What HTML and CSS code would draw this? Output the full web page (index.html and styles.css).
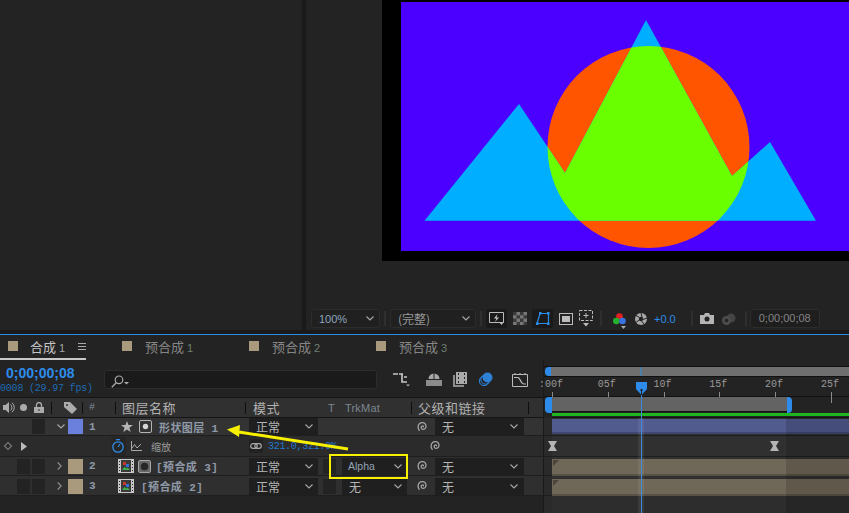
FILE: index.html
```html
<!DOCTYPE html>
<html lang="zh">
<head>
    <meta charset="UTF-8">
    <title>合成 1</title>
    <link rel="stylesheet" href="styles.css">
</head>
<body>
    <svg class="sprite" width="0" height="0">
        <symbol id="chev-down" viewBox="0 0 8 5"><path d="M0.5 0.5 4 4 7.5 0.5" fill="none" stroke="#a8a8a8" stroke-width="1.1"/></symbol>
        <symbol id="chev-right" viewBox="0 0 5 8"><path d="M0.7 0.5l3.5 3.5-3.5 3.5" fill="none" stroke="#8f8f8f" stroke-width="1.1"/></symbol>
        <symbol id="spiral" viewBox="0 0 12 12"><path d="M6.2 6.2C6.9 5.6 6 4.5 5 5 3.6 5.7 3.9 8 5.8 8.3 8.3 8.7 9.7 6 8.7 3.8 7.7 1.5 4.5 0.9 2.6 2.5 0.6 4.2 0.6 7.8 2.5 9.8" fill="none" stroke="#a5a5a5" stroke-width="1.3"/></symbol>
        <symbol id="comp" viewBox="0 0 16 14">
            <rect x="0.5" y="0.5" width="15" height="13" fill="#3a3a3a" stroke="#c8c8c8"/>
            <path d="M0 0h3v14H0zM13 0h3v14h-3z" fill="#c8c8c8"/>
            <path d="M1 2h1v1H1zM1 5h1v1H1zM1 8h1v1H1zM1 11h1v1H1zM14 2h1v1h-1zM14 5h1v1h-1zM14 8h1v1h-1zM14 11h1v1h-1z" fill="#2a2a2a"/>
            <rect x="5" y="3" width="3" height="3" fill="#c9362c"/>
            <rect x="8" y="5" width="3" height="3" fill="#2f6fd8"/>
            <path d="M4 11l2.500-3 2 1.500 1-1 2.500 2.500z" fill="#3fae49"/>
        </symbol>
    </svg>

    <div class="upper">
        <div class="project"></div>
        <div class="splitter"></div>
        <div class="viewer">
            <div class="stage">
                <div class="comp-area">
                    <svg class="art" viewBox="401 2 448 249" width="448" height="249">
                        <defs>
                            <clipPath id="circle-clip"><circle cx="648.5" cy="147" r="101"/></clipPath>
                        </defs>
                        <rect x="401" y="2" width="448" height="249" fill="#4b00ff"/>
                        <circle cx="648.5" cy="147" r="101" fill="#ff5500"/>
                        <polygon points="424.5,220.7 519,104 565,173 646,20 732,176 770,142 816,220.7" fill="#00aeff"/>
                        <polygon clip-path="url(#circle-clip)" points="424.5,220.7 519,104 565,173 646,20 732,176 770,142 816,220.7" fill="#6aff00"/>
                    </svg>
                </div>
            </div>
            <div class="viewer-bar">
                <div class="dropdown zoom-select"><span>100%</span><svg width="8" height="5"><use href="#chev-down"/></svg></div>
                <i class="bar-sep"></i>
                <div class="dropdown res-select"><span>(完整)</span><svg width="8" height="5"><use href="#chev-down"/></svg></div>
                <i class="bar-sep"></i>
                <div class="tool tool-on">
                    <svg width="15" height="13" viewBox="0 0 15 13"><path d="M0.5 0.5h14v10H0.5z" fill="none" stroke="#bbb"/><path d="M8.5 2 5 6.5h2.5L6 10l4-4.500H7.500z" fill="#ccc"/><path d="M10 10h5l-2.500 3z" fill="#bbb"/></svg>
                </div>
                <div class="tool">
                    <svg width="14" height="13" viewBox="0 0 14 13"><rect width="14" height="13" fill="#777"/><path d="M0 0h3.500v3.300H0zM7 0h3.500v3.300H7zM3.500 3.300H7v3.300H3.500zM10.500 3.300H14v3.300h-3.500zM0 6.600h3.500v3.300H0zM7 6.600h3.500v3.300H7zM3.500 9.900H7V13H3.500zM10.500 9.900H14V13h-3.500z" fill="#3a3a3a"/></svg>
                </div>
                <div class="tool tool-on">
                    <svg width="14" height="13" viewBox="0 0 14 13"><path d="M4 1.5h8.500V11.500H1z" fill="none" stroke="#2d8ceb" stroke-width="1.2"/><path d="M3 0h2.500v2.500H3zM11 0h2.500v2.500H11zM0 10.500h2.500V13H0zM11 10.500h2.500V13H11z" fill="#2d8ceb"/></svg>
                </div>
                <div class="tool">
                    <svg width="14" height="12" viewBox="0 0 14 12"><rect x="0.5" y="0.5" width="13" height="11" fill="none" stroke="#bbb"/><rect x="3" y="3" width="8" height="6" fill="#bbb"/></svg>
                </div>
                <div class="tool tool-last">
                    <svg width="16" height="17" viewBox="0 0 16 17"><rect x="1.5" y="0.5" width="13" height="10" fill="none" stroke="#bbb" stroke-dasharray="3 1.5"/><path d="M8 3v5M5.500 5.500h5" stroke="#bbb"/><path d="M5 13h6l-3 3.500z" fill="#bbb"/></svg>
                </div>
                <i class="bar-sep sep-wide"></i>
                <svg class="rgb" width="13" height="16" viewBox="0 0 13 16"><circle cx="6.5" cy="3.6" r="3.3" fill="#e21f1f"/><circle cx="3.3" cy="8" r="3.3" fill="#23b02e"/><circle cx="9.5" cy="8" r="3.3" fill="#3a72e0"/><path d="M8 13h5l-2.500 3z" fill="#aaa"/></svg>
                <svg class="shutter" width="12" height="12" viewBox="0 0 12 12"><circle cx="6" cy="6" r="6" fill="#a9a9a9"/><circle cx="6" cy="6" r="2.2" fill="#232323"/><path d="M6 0 7 4M12 5 8 6.500M9 11 6.500 8M1 9.500 4 7M1 2.500 4.500 4.500" stroke="#232323"/></svg>
                <span class="exposure">+0.0</span>
                <i class="bar-sep"></i>
                <svg class="camera" width="14" height="11" viewBox="0 0 14 11"><path d="M0 2h4l1-2h4l1 2h4v9H0z" fill="#b5b5b5"/><circle cx="7" cy="6" r="2.5" fill="#232323"/></svg>
                <svg class="snapshot" width="15" height="12" viewBox="0 0 15 12"><circle cx="10" cy="5" r="4.5" fill="#444"/><circle cx="5.5" cy="7.5" r="4.5" fill="#4c4c4c"/><circle cx="5.5" cy="7.5" r="1.8" fill="#232323"/></svg>
                <i class="bar-sep"></i>
                <div class="time-box">0;00;00;08</div>
            </div>
        </div>
    </div>

    <div class="timeline">
        <div class="tabs">
            <div class="tab tab-active"><i class="swatch"></i><span>合成<small>1</small></span><b class="tab-menu"></b></div>
            <div class="tab"><i class="swatch"></i><span>预合成<small>1</small></span></div>
            <div class="tab"><i class="swatch"></i><span>预合成<small>2</small></span></div>
            <div class="tab"><i class="swatch"></i><span>预合成<small>3</small></span></div>
        </div>

        <div class="timeline-body">
            <div class="layers">
                <div class="controls">
                    <div class="timecode">
                        <div class="time-main">0;00;00;08</div>
                        <div class="time-sub">0008 (29.97 fps)</div>
                    </div>
                    <div class="search">
                        <svg width="20" height="13" viewBox="0 0 20 13"><circle cx="8" cy="4.8" r="3.8" fill="none" stroke="#aaa" stroke-width="1.2"/><path d="M5.2 7.7 0.8 12.3" stroke="#aaa" stroke-width="1.3"/><path d="M13 7h5l-2.500 2.500z" fill="#aaa"/></svg>
                    </div>
                    <div class="switches">
                        <svg width="17" height="15" viewBox="0 0 17 15"><path d="M0 2h5M6 2h4M9 2v8h3M11 5h3M11 10h3" fill="none" stroke="#c8c8c8" stroke-width="1.6"/><path d="M13 12.500h4l-2 2z" fill="#aaa"/></svg>
                        <svg width="16" height="13" viewBox="0 0 16 13"><path d="M2.500 6a5.500 5.500 0 0 1 11 0z" fill="#a8a8a8"/><path d="M7.500 0h1v6h-1z" fill="#232323"/><rect y="7" width="16" height="6" fill="#8c8c8c"/></svg>
                        <svg width="14" height="15" viewBox="0 0 14 15"><path d="M0 3h2v10h9v2H0z" fill="#8c8c8c"/><rect x="3" y="0" width="11" height="12" fill="#aaa"/><path d="M5 1h1v2H5zM5 5h1v2H5zM5 9h1v2H5zM11 1h1v2h-1zM11 5h1v2h-1zM11 9h1v2h-1z" fill="#232323"/></svg>
                        <svg width="14" height="14" viewBox="0 0 14 14"><circle cx="5" cy="9" r="4.7" fill="none" stroke="#2d8ceb"/><circle cx="6.5" cy="7.5" r="4.7" fill="none" stroke="#2d8ceb"/><circle cx="8.5" cy="5.5" r="5" fill="#2d80d5"/></svg>
                        <svg width="16" height="15" viewBox="0 0 16 15"><path d="M0.5 2.500h15v12H0.5z" fill="none" stroke="#bbb"/><path d="M3 1v2M8 1v2M13 1v2" stroke="#bbb"/><path d="M2 5.500h3.500C9 5.500 8 12 12 12h2" fill="none" stroke="#bbb" stroke-width="1.2"/></svg>
                    </div>
                </div>

                <div class="col-head">
                    <svg width="12" height="11" viewBox="0 0 12 11"><path d="M0 3h2.500L6 0v11L2.500 8H0z" fill="#ababab"/><path d="M7.500 2.500a4 4 0 0 1 0 6M9 0.800a6 6 0 0 1 0 9.400" fill="none" stroke="#ababab"/></svg>
                    <svg width="7" height="7" viewBox="0 0 7 7"><circle cx="3.5" cy="3.5" r="3.5" fill="#ababab"/></svg>
                    <svg width="10" height="11" viewBox="0 0 10 11"><path d="M2.500 5V3a2.500 2.500 0 0 1 5 0v2" fill="none" stroke="#ababab" stroke-width="1.3"/><path d="M0 5h10v6H0z" fill="#ababab"/><path d="M4.500 7h1v2h-1z" fill="#303030"/></svg>
                    <i class="head-sep"></i>
                    <svg width="13" height="12" viewBox="0 0 13 12"><path d="M0 0h6l7 7-5 5-8-7z" fill="#ababab"/><circle cx="3" cy="3" r="1" fill="#303030"/></svg>
                    <i class="head-sep"></i>
                    <span class="hash">#</span>
                    <i class="head-sep"></i>
                    <span>图层名称</span>
                    <i class="head-sep"></i>
                    <span>模式</span>
                    <span class="h-t">T</span>
                    <span class="h-trk">TrkMat</span>
                    <i class="head-sep"></i>
                    <span>父级和链接</span>
                    <i class="head-sep"></i>
                </div>

                <div class="layer row-1">
                    <i class="box box-b"></i>
                    <svg class="chev-open" width="8" height="5"><use href="#chev-down"/></svg>
                    <i class="label label-blue"></i>
                    <span class="num">1</span>
                    <div class="layer-name">
                        <svg width="12" height="11" viewBox="0 0 12 11"><path d="M6 0l1.500 4H12L8.400 6.700 9.700 11 6 8.400 2.300 11l1.300-4.300L0 4h4.500z" fill="#b5b5b5"/></svg>
                        <svg width="13" height="13" viewBox="0 0 13 13"><rect x="0.5" y="0.5" width="12" height="12" rx="1.5" fill="#333" stroke="#b5b5b5"/><circle cx="6.5" cy="6.5" r="2.7" fill="#d5d5d5"/></svg>
                        <span class="name-text">形状图层 1</span>
                    </div>
                    <div class="select mode"><span>正常</span><svg width="8" height="5"><use href="#chev-down"/></svg></div>
                    <svg class="link-spiral" width="12" height="12"><use href="#spiral"/></svg>
                    <div class="select parent"><span>无</span><svg width="8" height="5"><use href="#chev-down"/></svg></div>
                </div>

                <div class="sub-row">
                    <svg width="8" height="8" viewBox="0 0 8 8"><path d="M4 0.5 7.5 4 4 7.5 0.5 4z" fill="none" stroke="#aaa"/></svg>
                    <svg width="6" height="9" viewBox="0 0 6 9"><path d="M0 0l6 4.500L0 9z" fill="#bbb"/></svg>
                    <div class="watch-box">
                        <svg width="12" height="14" viewBox="0 0 12 14"><circle cx="6" cy="8" r="5.2" fill="none" stroke="#2d8ceb" stroke-width="1.3"/><path d="M4 0.7h4M6 8l2-3" stroke="#2d8ceb" stroke-width="1.2"/></svg>
                    </div>
                    <svg width="11" height="10" viewBox="0 0 11 10"><path d="M0.5 0v9.500H11" fill="none" stroke="#aaa"/><path d="M1 7l2.500-3.500L6 7l4-4" fill="none" stroke="#aaa"/></svg>
                    <span class="prop-name">缩放</span>
                    <div class="link-box">
                        <svg width="12" height="6" viewBox="0 0 12 6"><rect x="0.7" y="0.7" width="6.5" height="4.6" rx="2.3" fill="none" stroke="#aaa" stroke-width="1.2"/><rect x="4.8" y="0.7" width="6.5" height="4.6" rx="2.3" fill="none" stroke="#aaa" stroke-width="1.2"/></svg>
                    </div>
                    <span class="prop-value">321.0,321.0%</span>
                    <svg width="12" height="12"><use href="#spiral"/></svg>
                </div>

                <div class="layer row-2">
                    <i class="box box-a"></i>
                    <i class="box box-b"></i>
                    <svg class="chev" width="5" height="8"><use href="#chev-right"/></svg>
                    <i class="label"></i>
                    <span class="num">2</span>
                    <div class="layer-name name-comp">
                        <svg width="16" height="14"><use href="#comp"/></svg>
                        <svg width="13" height="13" viewBox="0 0 13 13"><rect x="0.5" y="0.5" width="12" height="12" rx="1.5" fill="#666" stroke="#a5a5a5"/><circle cx="6.5" cy="6.5" r="3.8" fill="#262626"/></svg>
                        <span class="name-text">[预合成 3]</span>
                    </div>
                    <div class="select mode"><span>正常</span><svg width="8" height="5"><use href="#chev-down"/></svg></div>
                    <i class="box box-t"></i>
                    <div class="select trk"><span class="trk-alpha">Alpha</span><svg width="8" height="5"><use href="#chev-down"/></svg></div>
                    <svg class="link-spiral" width="12" height="12"><use href="#spiral"/></svg>
                    <div class="select parent"><span>无</span><svg width="8" height="5"><use href="#chev-down"/></svg></div>
                </div>

                <div class="layer row-3">
                    <i class="box box-a"></i>
                    <i class="box box-b"></i>
                    <svg class="chev" width="5" height="8"><use href="#chev-right"/></svg>
                    <i class="label"></i>
                    <span class="num">3</span>
                    <div class="layer-name name-comp">
                        <svg width="16" height="14"><use href="#comp"/></svg>
                        <span class="name-text name-plain">[预合成 2]</span>
                    </div>
                    <div class="select mode"><span>正常</span><svg width="8" height="5"><use href="#chev-down"/></svg></div>
                    <i class="box box-t"></i>
                    <div class="select trk"><span>无</span><svg width="8" height="5"><use href="#chev-down"/></svg></div>
                    <svg class="link-spiral" width="12" height="12"><use href="#spiral"/></svg>
                    <div class="select parent"><span>无</span><svg width="8" height="5"><use href="#chev-down"/></svg></div>
                </div>
            </div>

            <div class="tracks">
                <div class="nav-bar"><i class="nav-handle"></i><i class="nav-thumb"></i></div>
                <div class="ruler">
                    <span>:00f</span><span>05f</span><span>10f</span><span>15f</span><span>20f</span><span class="major">25f</span>
                </div>
                <div class="work-bar"><i class="work-handle"></i><i class="work-range"></i><i class="work-handle work-end"></i></div>
                <div class="green-line"></div>

                <div class="track track-1"><i class="clip clip-shape"></i></div>
                <div class="track track-sub">
                    <svg class="key" width="9" height="10" viewBox="0 0 9 10"><path d="M0 0h9L6 5l3 5H0l3-5z" fill="#b5b5b5"/></svg>
                    <svg class="key key-end" width="9" height="10" viewBox="0 0 9 10"><path d="M0 0h9L6 5l3 5H0l3-5z" fill="#b5b5b5"/></svg>
                </div>
                <div class="track track-2"><i class="clip clip-comp"></i></div>
                <div class="track"><i class="clip clip-comp"></i></div>
                <div class="track-rest"></div>

                <div class="outside-work"></div>
                <div class="time-band"></div>
            </div>
        </div>

        <!-- playhead and the annotation sit on top of the panel -->
        <svg class="playhead" width="11" height="132" viewBox="0 0 11 132"><path d="M0 0h11v7l-5.500 6L0 7z" fill="#2d8ceb"/><path d="M4.500 7h2v2h-0.500v4h-1V9h-0.500z" fill="#222"/><path d="M5 13h1v119H5z" fill="#3b8ad9"/></svg>
        <div class="callout"></div>
        <svg class="arrow" width="130" height="32" viewBox="0 0 130 32"><path d="M123 24 14 7" stroke="#f7f000" stroke-width="3"/><path d="M2 4.500 15 0l-1 12z" fill="#f7f000"/></svg>
    </div>
</body>
</html>
```

FILE: styles.css
```css
* {
    box-sizing: border-box;
}

html, body {
    margin: 0;
    padding: 0;
    height: 513px;
    overflow: hidden;
}

body {
    background-color: #232323;
    color: #b5b5b5;
    font-family: "Noto Sans CJK SC", "Liberation Sans", sans-serif;
    font-size: 12px;
}

i {
    display: block;
}

.sprite {
    position: absolute;
}

/* top half */
.upper {
    display: flex;
    height: 335px;
    border-bottom: 1px solid #2d8ceb;
}

.project {
    width: 302px;
    background-color: #232323;
    border-bottom: 4px solid #1a1a1a;
}

.splitter {
    width: 4px;
    background-color: #1a1a1a;
}

.viewer {
    flex: 1;
    display: flex;
    flex-direction: column;
    min-width: 0;
    background-color: #1a1a1a;
}

.stage {
    height: 307px;
    padding-left: 76px;
    background-color: #232323;
}

.comp-area {
    height: 261px;
    padding: 2px 0 10px 19px;
    background-color: #000;
    overflow: hidden;
}

.art {
    display: block;
}

.viewer-bar {
    height: 23px;
    padding-left: 5px;
    display: flex;
    align-items: center;
    background-color: #232323;
}

.dropdown {
    height: 19px;
    display: flex;
    align-items: center;
    justify-content: space-between;
    padding: 0 5px 0 7px;
    border: 1px solid #2c2c2c;
    border-radius: 3px;
    background-color: #202020;
    color: #9a9a9a;
}

.zoom-select {
    width: 69px;
    font-family: "Liberation Sans", sans-serif;
    font-size: 11px;
    color: #8fa6bf;
}

.res-select {
    width: 86px;
    font-size: 12px;
}

.bar-sep {
    width: 2px;
    height: 15px;
    margin: 0 4px;
    background-color: #2f2f2f;
}

.sep-wide {
    margin: 0 11px 0 6px;
}

.tool {
    width: 21px;
    height: 19px;
    display: flex;
    align-items: center;
    justify-content: center;
    margin-right: 2px;
    border-radius: 2px;
}

.tool-last {
    width: 16px;
    margin-right: 0;
}

.tool-on {
    background-color: #1a1a1a;
}

.rgb {
    margin-top: 4px;
}

.shutter {
    margin-left: 9px;
}

.exposure {
    margin: 0 11px 0 7px;
    font-family: "Liberation Sans", sans-serif;
    font-size: 11px;
    color: #2d8ceb;
}

.camera {
    margin-left: 3px;
}

.snapshot {
    margin: 0 5px 0 7px;
}

.time-box {
    width: 70px;
    height: 19px;
    margin-left: -1px;
    border: 1px solid #2c2c2c;
    border-radius: 3px;
    background-color: #1e1e1e;
    color: #858585;
    font-family: "Liberation Sans", sans-serif;
    font-size: 11px;
    line-height: 17px;
    text-align: center;
}

/* timeline */
.timeline {
    position: relative;
    height: 178px;
    overflow: hidden;
}

.tabs {
    display: flex;
    height: 25px;
    padding-bottom: 3px;
}

.tab {
    width: 127px;
    padding-left: 8px;
    display: flex;
    align-items: center;
    gap: 13px;
    color: #868686;
    font-size: 13px;
}

.tab small {
    margin-left: 3px;
    font-family: "Liberation Sans", sans-serif;
    font-size: 11px;
    color: #6f7f72;
}

.tab-active {
    position: relative;
    width: 114px;
    gap: 12px;
    color: #c4c4c4;
}

.tab-active::after {
    content: "";
    position: absolute;
    left: 0;
    bottom: -3px;
    width: 86px;
    height: 2px;
    background-color: #c8c8c8;
}

.tab-active small {
    color: #a5a5a5;
}

.tab-menu {
    width: 8px;
    height: 7px;
    margin-left: 1px;
    border-top: 1px solid #aaa;
    border-bottom: 1px solid #aaa;
    background: linear-gradient(#aaa, #aaa) center / 100% 1px no-repeat;
}

.swatch {
    width: 10px;
    height: 10px;
    background-color: #a99a7e;
}

.timeline-body {
    display: flex;
    height: 153px;
}

.layers {
    width: 544px;
    border-right: 1px solid #1a1a1a;
}

.controls {
    height: 37px;
    display: flex;
    align-items: flex-start;
}

.timecode {
    width: 104px;
    white-space: nowrap;
}

.time-main {
    margin: 4px 0 0 6px;
    font-family: "Liberation Sans", sans-serif;
    font-size: 14px;
    line-height: 18px;
    font-weight: bold;
    color: #2d8ceb;
}

.time-sub {
    font-family: "Liberation Mono", monospace;
    font-size: 10px;
    line-height: 13px;
    letter-spacing: -0.2px;
    color: #1d6ab3;
}

.search {
    width: 273px;
    height: 19px;
    margin-top: 10px;
    padding: 3px 0 0 6px;
    border: 1px solid #2c2c2c;
    border-radius: 3px;
    background-color: #1a1a1a;
}

.switches {
    display: flex;
    align-items: center;
    margin: 11px 0 0 16px;
    height: 16px;
}

.switches svg:nth-child(2) {
    margin-left: 16px;
}

.switches svg:nth-child(3) {
    margin-left: 11px;
}

.switches svg:nth-child(4) {
    margin-left: 12px;
}

.switches svg:nth-child(5) {
    margin-left: 19px;
}

.col-head {
    height: 21px;
    padding: 0 0 3px 3px;
    display: grid;
    grid-template-columns: 17px 14px 17px 13px 18px 7px 26px 7px 123px 8px 75px 17px 66px 7px 110px 16px;
    align-items: center;
    border-top: 1px solid #151515;
    border-bottom: 1px solid #151515;
    background-color: #303030;
    font-size: 13px;
    letter-spacing: 0.5px;
    color: #b0b0b0;
}

.head-sep {
    width: 1px;
    height: 12px;
    background-color: #0e0e0e;
}

.hash {
    font-family: "Liberation Mono", monospace;
    font-size: 10px;
    color: #7d8b99;
}

.h-t, .h-trk {
    font-family: "Liberation Sans", sans-serif;
    font-size: 11px;
    letter-spacing: 0.2px;
    color: #7d8790;
}

.layer {
    height: 20px;
    padding-top: 1px;
    display: grid;
    grid-template-columns: 17px 13px 2px 13px 10px 13px 15px 17px 149px 69px 5px 13px 6px 65px 28px 89px;
    grid-template-rows: 18px;
    align-items: center;
    border-bottom: 1px solid #1e1e1e;
    background-color: #2f2f2f;
}

.row-1 {
    height: 18px;
    padding-top: 0;
    grid-template-rows: 17px;
    background-color: #333;
}

.row-2 {
    height: 19px;
    padding-top: 0;
}

.box {
    height: 15px;
    background-color: #232323;
}

.box-a {
    grid-column: 2;
}

.box-b {
    grid-column: 4;
}

.box-t {
    grid-column: 12;
}

.chev {
    grid-column: 6;
    margin-left: 2px;
}

.chev-open {
    grid-column: 6;
    margin-left: 2px;
}

.label {
    grid-column: 7;
    width: 15px;
    height: 15px;
    background-color: #a99a7e;
}

.label-blue {
    background-color: #6b7fdc;
}

.num {
    grid-column: 8;
    padding-left: 6px;
    font-family: "Liberation Mono", monospace;
    font-size: 11px;
    font-weight: bold;
    color: #8d9aa8;
}

.layer-name {
    grid-column: 9;
    display: flex;
    align-items: center;
    gap: 6px;
    padding-left: 21px;
}

.name-comp {
    padding-left: 18px;
    gap: 4px;
}

.name-text {
    margin-left: 1px;
    font-family: "Liberation Mono", "Noto Sans CJK SC", monospace;
    font-size: 11px;
    font-weight: bold;
    letter-spacing: 0.4px;
    color: #8f99a8;
    white-space: nowrap;
}

.name-plain {
    margin-left: 3px;
}

.select {
    height: 17px;
    display: flex;
    align-items: center;
    justify-content: space-between;
    padding: 0 5px 0 7px;
    background-color: #1f1f1f;
    color: #b5b5b5;
}

.mode {
    grid-column: 10;
}

.trk {
    grid-column: 14;
}

.trk-alpha {
    font-family: "Liberation Sans", sans-serif;
    font-size: 10.5px;
    margin-left: -1px;
    color: #94a3b5;
}

.parent {
    grid-column: 16;
    padding-right: 6px;
}

.link-spiral {
    grid-column: 15;
    margin-left: 10px;
}

.sub-row {
    height: 21px;
    padding-left: 4px;
    display: grid;
    grid-template-columns: 17px 90px 20px 20px 98px 19px 162px 12px;
    align-items: center;
    border-bottom: 1px solid #1e1e1e;
    background-color: #2b2b2b;
}

.watch-box {
    width: 15px;
    height: 19px;
    padding-left: 1px;
    display: flex;
    align-items: center;
    background-color: #262626;
}

.prop-name {
    font-size: 10px;
    color: #9a9a9a;
}

.link-box {
    width: 14px;
    height: 14px;
    display: flex;
    align-items: center;
    justify-content: center;
    background-color: #222;
}

.prop-value {
    font-family: "Liberation Mono", monospace;
    font-size: 10px;
    letter-spacing: -0.3px;
    color: #2378d0;
}

/* right side of the timeline */
.tracks {
    position: relative;
    flex: 1;
    min-width: 0;
    padding-top: 6px;
    display: flex;
    flex-direction: column;
    background-color: #232323;
}

.nav-bar {
    position: relative;
    height: 11px;
    padding-left: 7px;
    border-top: 1px solid #111;
    border-bottom: 1px solid #111;
}

.nav-bar::after {
    content: "";
    display: block;
    height: 100%;
    background-color: #6f6f6f;
}

.nav-handle {
    position: absolute;
    left: 1px;
    top: 0;
    width: 6px;
    height: 9px;
    border-radius: 4px 0 0 4px;
    background-color: #2d8ceb;
}

.nav-thumb {
    position: absolute;
    left: 96px;
    top: 0;
    width: 2px;
    height: 9px;
    z-index: 1;
    background-color: #4f7ea8;
}

.ruler {
    height: 19px;
    display: flex;
    margin-left: -21px;
    padding-top: 1px;
}

.ruler span {
    position: relative;
    flex: 0 0 55.8px;
    text-align: center;
    font-family: "Liberation Mono", monospace;
    font-size: 10px;
    line-height: 14px;
    color: #9a9a9a;
}

.ruler span::after {
    content: "";
    position: absolute;
    left: 29px;
    top: 14px;
    width: 1px;
    height: 5px;
    background-color: #8a8a8a;
}

.ruler .major::after {
    height: 11px;
    z-index: 1;
}

.work-bar {
    height: 17px;
    display: flex;
    border-top: 1px solid #111;
}

.work-handle {
    width: 7px;
    height: 16px;
    margin-left: 1px;
    border-radius: 4px 0 0 4px;
    background-color: #2d8ceb;
}

.work-range {
    width: 235px;
    height: 15px;
    background-color: #636363;
    border-bottom: 1px solid #111;
}

.work-end {
    width: 5px;
    margin-left: 0;
    border-radius: 0 4px 4px 0;
}

.green-line {
    height: 5px;
    margin-left: 8px;
    border-top: 3px solid #1eb61e;
    border-bottom: 1px solid #151515;
}

.track {
    position: relative;
    height: 20px;
    padding-left: 8px;
    border-bottom: 1px solid #1e1e1e;
    background: linear-gradient(90deg, #2a2a2a 8px, #303030 8px);
}

.track-1 {
    height: 18px;
    padding-top: 1px;
}

.track-sub {
    height: 21px;
}

.track-2 {
    height: 19px;
}

.track-sub .key {
    position: absolute;
    left: 4px;
    top: 5px;
}

.track-sub .key-end {
    left: 226px;
}

.track-rest {
    flex: 1;
    background: linear-gradient(90deg, #2a2a2a 8px, #2d2d2d 8px);
}

.clip {
    height: 17px;
    position: relative;
    margin-top: 2px;
    border-bottom: 2px solid rgba(0, 0, 0, 0.2);
}

.clip-shape {
    height: 15px;
    margin-top: 0;
    background-color: #515b8e;
}

.clip-comp {
    background-color: #6f6758;
}

.track:not(.track-2) .clip-comp {
    margin-top: 3px;
}

.clip-comp::before {
    content: "";
    position: absolute;
    left: 1px;
    top: 1px;
    border-top: 6px solid #4b453b;
    border-right: 6px solid transparent;
}

.outside-work {
    position: absolute;
    left: 242px;
    right: 0;
    top: 58px;
    bottom: 0;
    background-color: rgba(0, 0, 0, 0.14);
}

.time-band {
    position: absolute;
    left: 94px;
    width: 6px;
    top: 58px;
    bottom: 0;
    background-color: rgba(255, 255, 255, 0.07);
}

.playhead {
    position: absolute;
    left: 636px;
    top: 47px;
}

.callout {
    position: absolute;
    left: 329px;
    top: 119px;
    width: 79px;
    height: 25px;
    border: 2px solid #f7f000;
}

.arrow {
    position: absolute;
    left: 225px;
    top: 90px;
}
```
